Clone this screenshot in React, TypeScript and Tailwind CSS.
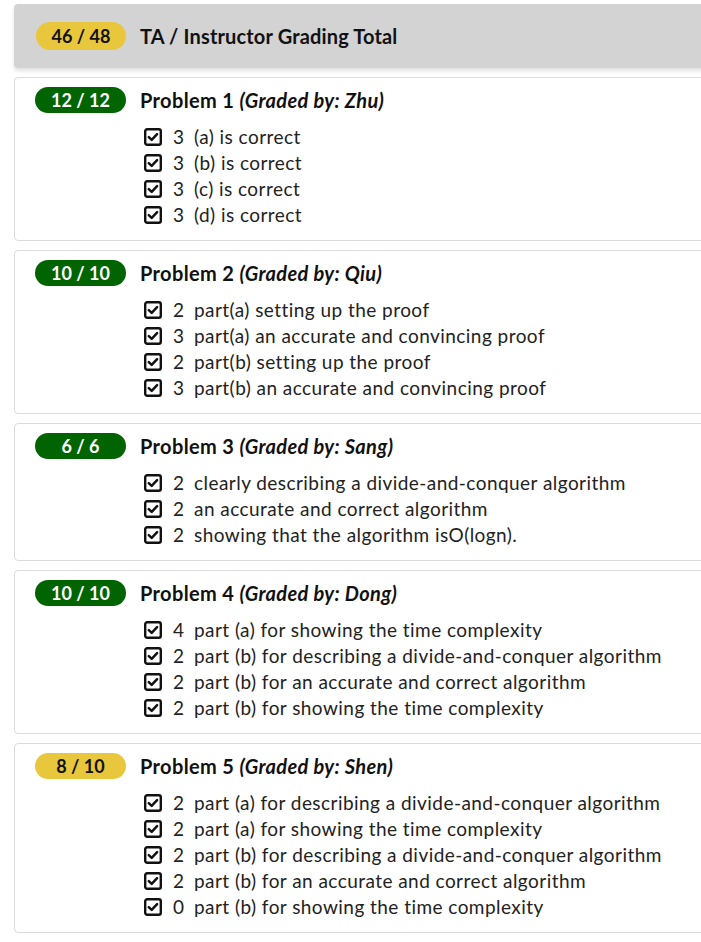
type Item = { pts: number; text: string };
type Problem = {
  num: number;
  grader: string;
  score: string;
  full: boolean;
  items: Item[];
};

const problems: Problem[] = [
  {
    num: 1,
    grader: "Zhu",
    score: "12 / 12",
    full: true,
    items: [
      { pts: 3, text: "(a) is correct" },
      { pts: 3, text: "(b) is correct" },
      { pts: 3, text: "(c) is correct" },
      { pts: 3, text: "(d) is correct" },
    ],
  },
  {
    num: 2,
    grader: "Qiu",
    score: "10 / 10",
    full: true,
    items: [
      { pts: 2, text: "part(a) setting up the proof" },
      { pts: 3, text: "part(a) an accurate and convincing proof" },
      { pts: 2, text: "part(b) setting up the proof" },
      { pts: 3, text: "part(b) an accurate and convincing proof" },
    ],
  },
  {
    num: 3,
    grader: "Sang",
    score: "6 / 6",
    full: true,
    items: [
      { pts: 2, text: "clearly describing a divide-and-conquer algorithm" },
      { pts: 2, text: "an accurate and correct algorithm" },
      { pts: 2, text: "showing that the algorithm isO(logn)." },
    ],
  },
  {
    num: 4,
    grader: "Dong",
    score: "10 / 10",
    full: true,
    items: [
      { pts: 4, text: "part (a) for showing the time complexity" },
      { pts: 2, text: "part (b) for describing a divide-and-conquer algorithm" },
      { pts: 2, text: "part (b) for an accurate and correct algorithm" },
      { pts: 2, text: "part (b) for showing the time complexity" },
    ],
  },
  {
    num: 5,
    grader: "Shen",
    score: "8 / 10",
    full: false,
    items: [
      { pts: 2, text: "part (a) for describing a divide-and-conquer algorithm" },
      { pts: 2, text: "part (a) for showing the time complexity" },
      { pts: 2, text: "part (b) for describing a divide-and-conquer algorithm" },
      { pts: 2, text: "part (b) for an accurate and correct algorithm" },
      { pts: 0, text: "part (b) for showing the time complexity" },
    ],
  },
];

// square-check outline, like the rubric checkbox in the grader view
function CheckIcon() {
  return (
    <svg width="18" height="18" viewBox="0 0 18 18" className="shrink-0">
      <rect x="1.2" y="1.2" width="15.6" height="15.6" rx="2" fill="none" stroke="#111" strokeWidth="2.4" />
      <path d="M4.8 9.2 L7.7 11.9 L13.1 6.2" fill="none" stroke="#111" strokeWidth="2.5" strokeLinecap="round" strokeLinejoin="round" />
    </svg>
  );
}

function ProblemCard({ p }: { p: Problem }) {
  return (
    <div className="mt-[9px] flex rounded border border-[#dcdcdc] bg-white pt-[9px] pb-[12px] pl-[20px]">
      <div
        className={`flex h-[26px] w-[91px] shrink-0 items-center justify-center rounded-full text-[18px] font-bold ${
          p.full ? "bg-[#006400] text-white" : "bg-[#e9c73d] text-[#111]"
        }`}>
        {p.score}
      </div>
      <div className="ml-[14px] flex flex-col">
        <div className="flex h-[26px] items-center text-[20px] font-bold tracking-[0.35px] text-[#111]">
          Problem {p.num}&nbsp;<i>(Graded by: {p.grader})</i>
        </div>
        <div className="mt-[11px] flex flex-col pl-[4px]">
          {p.items.map((it, i) => (
            <div key={i} className="flex h-[26px] items-center text-[19px] tracking-[0.45px] text-[#222]">
              <CheckIcon />
              <span className="ml-[11px] w-[21px]">{it.pts}</span>
              <span>{it.text}</span>
            </div>
          ))}
        </div>
      </div>
    </div>
  );
}

export default function App() {
  return (
    <div className="min-h-screen w-full overflow-hidden bg-white" style={{ fontFamily: "Lato, 'Noto Sans', sans-serif" }}>
      <div className="w-[740px] pt-[4px] pl-[14px]">
        <div className="flex h-[64px] items-center rounded bg-[#d3d3d3] pl-[22px] shadow-[0_3px_4px_rgba(0,0,0,0.12)]">
          <div className="flex h-[28px] w-[90px] items-center justify-center rounded-full bg-[#e9c73d] text-[18px] font-bold text-[#111]">
            46 / 48
          </div>
          <div className="ml-[14px] text-[20px] font-bold tracking-[0.15px] text-[#111]">TA / Instructor Grading Total</div>
        </div>
        {problems.map((p) => (
          <ProblemCard key={p.num} p={p} />
        ))}
      </div>
    </div>
  );
}
